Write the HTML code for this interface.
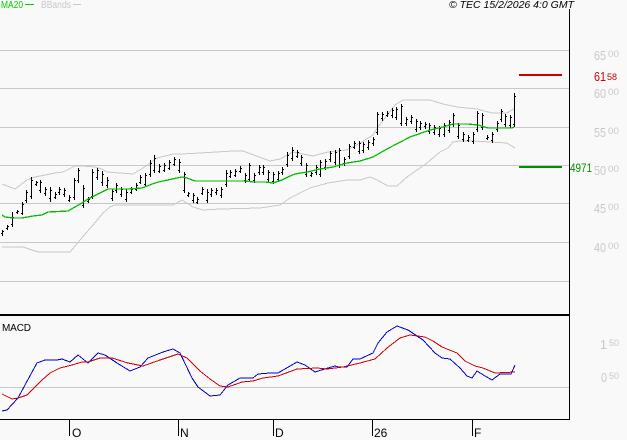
<!DOCTYPE html>
<html><head><meta charset="utf-8"><style>
html,body{margin:0;padding:0;background:#f9f9f9}
svg{display:block}
text{font-family:"Liberation Sans",sans-serif}
.g{fill:#c8c8c8}
.b{font-size:12.5px}.s{font-size:9.5px}
</style></head><body>
<svg width="627" height="440" viewBox="0 0 627 440" xmlns="http://www.w3.org/2000/svg">
<rect width="627" height="440" fill="#f9f9f9"/>
<g shape-rendering="crispEdges">
<path d="M0 50.5H569M0 88.5H569M0 127.5H569M0 165.5H569M0 203.5H569M0 242.5H569M0 281.5H569M0 387.5H569" stroke="#c8c8c8" fill="none"/>
<path d="M569.5 9V420M0 419.5H569.5M69.5 419V436M178.5 419V436M273.5 419V436M372.5 419V436M472.5 419V436" stroke="#000" fill="none"/>
<rect x="0" y="314" width="570" height="2" fill="#000"/>
<rect x="519" y="74" width="43" height="2" fill="#cc0000"/>
<rect x="519" y="166" width="43" height="2" fill="#009000"/>
<rect x="25" y="4" width="9" height="1" fill="#00d000"/>
<rect x="73" y="4" width="8" height="1" fill="#c8c8c8"/>

<polyline fill="none" stroke="#c8c8c8" points="2,184 15,189 27,180 35,177 55,173 63,172 75,166 83,166 95,167 102,169 107,172 133,174 143,168 157,158 173,154 182,154 200,153 233,151 243,151 270,161 280,159 293,152 313,156 328,152 347,150 360,143 373,135 378,127 395,105 403,100 430,100 443,104 457,107 477,109 492,113 507,113 515,108"/>
<polyline fill="none" stroke="#c8c8c8" points="2,247 23,247 38,252 70,252 80,240 93,225 103,213 110,207 115,205 140,205 157,205 173,205 182,200 193,207 203,210 220,209 260,208 280,205 290,198 310,188 328,183 347,180 360,180 370,177 377,180 388,186 397,186 407,177 427,163 440,152 448,148 453,142 460,141 473,141 507,143 515,148"/>

<g transform="translate(.5,0)"><path fill="none" stroke="#000" d="M2 230V236M7 225V230M12 212V227M17 210V214M22 202V215M26 190V203M31 177V199M36 181V186M40 180V193M45 187V196M50 187V202M55 192V199M59 187V195M64 188V197M69 195V202M74 178V200M78 168V183M83 185V208M88 197V203M92 169V199M97 168V180M102 171V186M107 177V188M112 189V201M116 183V193M121 187V197M126 189V202M131 187V194M136 183V191M140 175V184M145 173V187M150 160V177M154 155V173M159 164V173M164 163V172M169 160V170M174 157V166M179 159V173M184 172V193M188 192V197M193 193V203M197 197V204M202 187V195M207 189V203M211 188V197M216 188V195M221 187V198M226 170V187M230 170V178M235 169V177M240 166V173M245 173V183M249 163V182M254 173V183M259 165V175M263 165V175M268 170V182M273 172V184M278 171V182M282 167V175M287 152V167M292 147V161M297 150V158M301 155V166M306 163V177M311 172V177M316 165V175M320 160V177M325 159V170M330 151V162M335 150V165M339 148V168M344 157V166M349 144V159M354 141V149M359 141V154M363 142V153M368 140V150M373 137V146M377 112V135M382 112V121M387 111V117M392 108V118M396 107V120M401 104V126M406 117V126M411 115V124M416 119V132M420 121V130M425 122V129M429 123V134M434 125V135M439 126V137M444 123V137M449 120V133M453 113V127M458 123V139M463 132V142M468 135V142M473 132V144M477 111V132M482 113V130M487 135V140M492 132V143M497 121V132M501 109V122M505 114V127M510 115V128M514 93V127"/></g>
<g transform="translate(0,.5)"><path fill="none" stroke="#000" d="M1 233h1M3 231h1M6 228h1M8 226h1M11 224h1M13 217h1M16 212h1M18 211h1M21 213h1M23 204h1M25 200h1M27 192h1M30 196h1M32 180h1M35 184h1M37 182h1M39 190h1M41 182h1M44 193h1M46 189h1M49 198h1M51 190h1M54 197h1M56 194h1M58 192h1M60 189h1M63 194h1M65 190h1M68 200h1M70 197h1M73 197h1M75 180h1M77 180h1M79 170h1M82 205h1M84 188h1M87 201h1M89 199h1M91 196h1M93 172h1M96 177h1M98 170h1M101 182h1M103 174h1M106 185h1M108 180h1M111 198h1M113 191h1M115 190h1M117 185h1M120 194h1M122 189h1M125 199h1M127 192h1M130 192h1M132 189h1M135 189h1M137 185h1M139 182h1M141 177h1M144 184h1M146 175h1M149 174h1M151 163h1M153 170h1M155 158h1M158 171h1M160 166h1M163 170h1M165 165h1M168 168h1M170 162h1M173 164h1M175 159h1M178 170h1M180 162h1M183 190h1M185 174h1M187 195h1M189 193h1M192 200h1M194 195h1M196 202h1M198 199h1M201 193h1M203 189h1M206 200h1M208 192h1M210 194h1M212 190h1M215 192h1M217 190h1M220 195h1M222 189h1M225 184h1M227 173h1M229 176h1M231 172h1M234 175h1M236 171h1M239 171h1M241 168h1M244 180h1M246 175h1M248 179h1M250 165h1M253 180h1M255 175h1M258 172h1M260 167h1M262 172h1M264 167h1M267 179h1M269 172h1M272 181h1M274 174h1M277 179h1M279 173h1M281 172h1M283 169h1M286 164h1M288 155h1M291 158h1M293 150h1M296 156h1M298 152h1M300 163h1M302 157h1M305 174h1M307 165h1M310 175h1M312 173h1M315 172h1M317 167h1M319 174h1M321 162h1M324 167h1M326 161h1M329 159h1M331 153h1M334 162h1M336 152h1M338 165h1M340 150h1M343 163h1M345 159h1M348 156h1M350 146h1M353 147h1M355 143h1M358 151h1M360 143h1M362 150h1M364 144h1M367 147h1M369 142h1M372 143h1M374 139h1M376 132h1M378 114h1M381 118h1M383 114h1M386 115h1M388 113h1M391 115h1M393 110h1M395 117h1M397 109h1M400 123h1M402 106h1M405 123h1M407 119h1M410 121h1M412 117h1M415 129h1M417 121h1M419 127h1M421 123h1M424 126h1M426 124h1M428 131h1M430 125h1M433 132h1M435 127h1M438 134h1M440 128h1M443 134h1M445 125h1M448 130h1M450 122h1M452 124h1M454 115h1M457 136h1M459 125h1M462 139h1M464 134h1M467 140h1M469 137h1M472 141h1M474 134h1M476 129h1M478 113h1M481 127h1M483 115h1M486 138h1M488 137h1M491 140h1M493 134h1M496 129h1M498 123h1M500 119h1M502 111h1M504 124h1M506 116h1M509 125h1M511 117h1M513 124h1M515 96h1"/></g>

<polyline fill="none" stroke="#00c000" stroke-width="1.3" points="2,215 5,217 13,218 22,218 33,216 42,215 48,212 68,211 82,203 88,199 100,193 108,189 120,189 128,189 142,188 155,183 163,181 177,178 182,177 187,178 195,181 210,181 226,181 245,181 253,182 265,182 273,183 282,180 288,177 295,174 307,172 320,169 333,167 347,163 360,161 373,157 387,149 410,137 430,130 443,127 453,124 468,124 478,125 488,128 512,128 514,127"/>

<polyline fill="none" stroke="#0000d0" points="2,411 7,410 18,398 25,385 37,363 45,360 57,360 62,359 70,362 78,355 88,363 98,353 105,355 117,363 130,371 140,367 148,358 163,352 173,349 180,353 192,378 198,387 210,396 220,395 228,385 240,378 253,378 258,374 270,373 278,373 297,362 305,365 315,372 328,368 335,366 338,367 347,367 353,359 360,359 373,353 378,343 387,332 397,326 408,330 423,340 435,353 442,358 450,359 460,368 467,376 472,378 477,371 485,376 492,380 500,374 511,374 515,365"/>
<polyline fill="none" stroke="#d00000" points="2,394 12,399 18,398 27,395 42,380 50,373 60,368 72,365 82,362 88,362 100,358 112,358 128,363 143,366 160,360 178,354 187,358 200,371 210,379 220,386 228,387 242,382 253,381 263,378 278,376 297,369 317,368 327,369 343,367 360,363 375,359 387,348 400,338 410,335 425,337 433,341 442,347 457,353 465,361 475,366 483,368 495,373 515,372"/>
</g>

<text x="1" y="8" font-size="10" fill="#00d000" textLength="22" lengthAdjust="spacingAndGlyphs">MA20</text>
<text x="41" y="8" font-size="10" class="g" textLength="30" lengthAdjust="spacingAndGlyphs">BBands</text>
<text x="449" y="8" font-size="10" font-style="italic" fill="#000" textLength="125" lengthAdjust="spacingAndGlyphs">© TEC 15/2/2026 4:0 GMT</text>

<g class="g">
<text x="594" y="60" class="b" textLength="12" lengthAdjust="spacingAndGlyphs">65</text><text x="608" y="57" class="s" textLength="11" lengthAdjust="spacingAndGlyphs">00</text>
<text x="594" y="98" class="b" textLength="12" lengthAdjust="spacingAndGlyphs">60</text><text x="608" y="95" class="s" textLength="11" lengthAdjust="spacingAndGlyphs">00</text>
<text x="594" y="137" class="b" textLength="12" lengthAdjust="spacingAndGlyphs">55</text><text x="608" y="134" class="s" textLength="11" lengthAdjust="spacingAndGlyphs">00</text>
<text x="594" y="175" class="b" textLength="12" lengthAdjust="spacingAndGlyphs">50</text><text x="608" y="172" class="s" textLength="11" lengthAdjust="spacingAndGlyphs">00</text>
<text x="594" y="213" class="b" textLength="12" lengthAdjust="spacingAndGlyphs">45</text><text x="608" y="210" class="s" textLength="11" lengthAdjust="spacingAndGlyphs">00</text>
<text x="594" y="252" class="b" textLength="12" lengthAdjust="spacingAndGlyphs">40</text><text x="608" y="249" class="s" textLength="11" lengthAdjust="spacingAndGlyphs">00</text>
<text x="600" y="349" class="b">1</text><text x="609" y="346" class="s" textLength="10" lengthAdjust="spacingAndGlyphs">50</text>
<text x="601" y="382" class="b" textLength="6" lengthAdjust="spacingAndGlyphs">0</text><text x="609" y="379" class="s" textLength="10" lengthAdjust="spacingAndGlyphs">50</text>
</g>
<text x="594" y="81" class="b" fill="#cc0000" textLength="12" lengthAdjust="spacingAndGlyphs">61</text><text x="607" y="80" class="s" fill="#cc0000" textLength="10" lengthAdjust="spacingAndGlyphs">58</text>
<text x="570" y="172" font-size="12" fill="#009000" textLength="22" lengthAdjust="spacingAndGlyphs">4971</text>

<text x="2" y="331" font-size="10" fill="#000" textLength="29">MACD</text>
<text x="72" y="437" font-size="12" fill="#000">O</text>
<text x="180" y="437" font-size="12" fill="#000">N</text>
<text x="275" y="437" font-size="12" fill="#000">D</text>
<text x="374" y="437" font-size="12" fill="#000">26</text>
<text x="474" y="437" font-size="12" fill="#000">F</text>
</svg>
</body></html>
